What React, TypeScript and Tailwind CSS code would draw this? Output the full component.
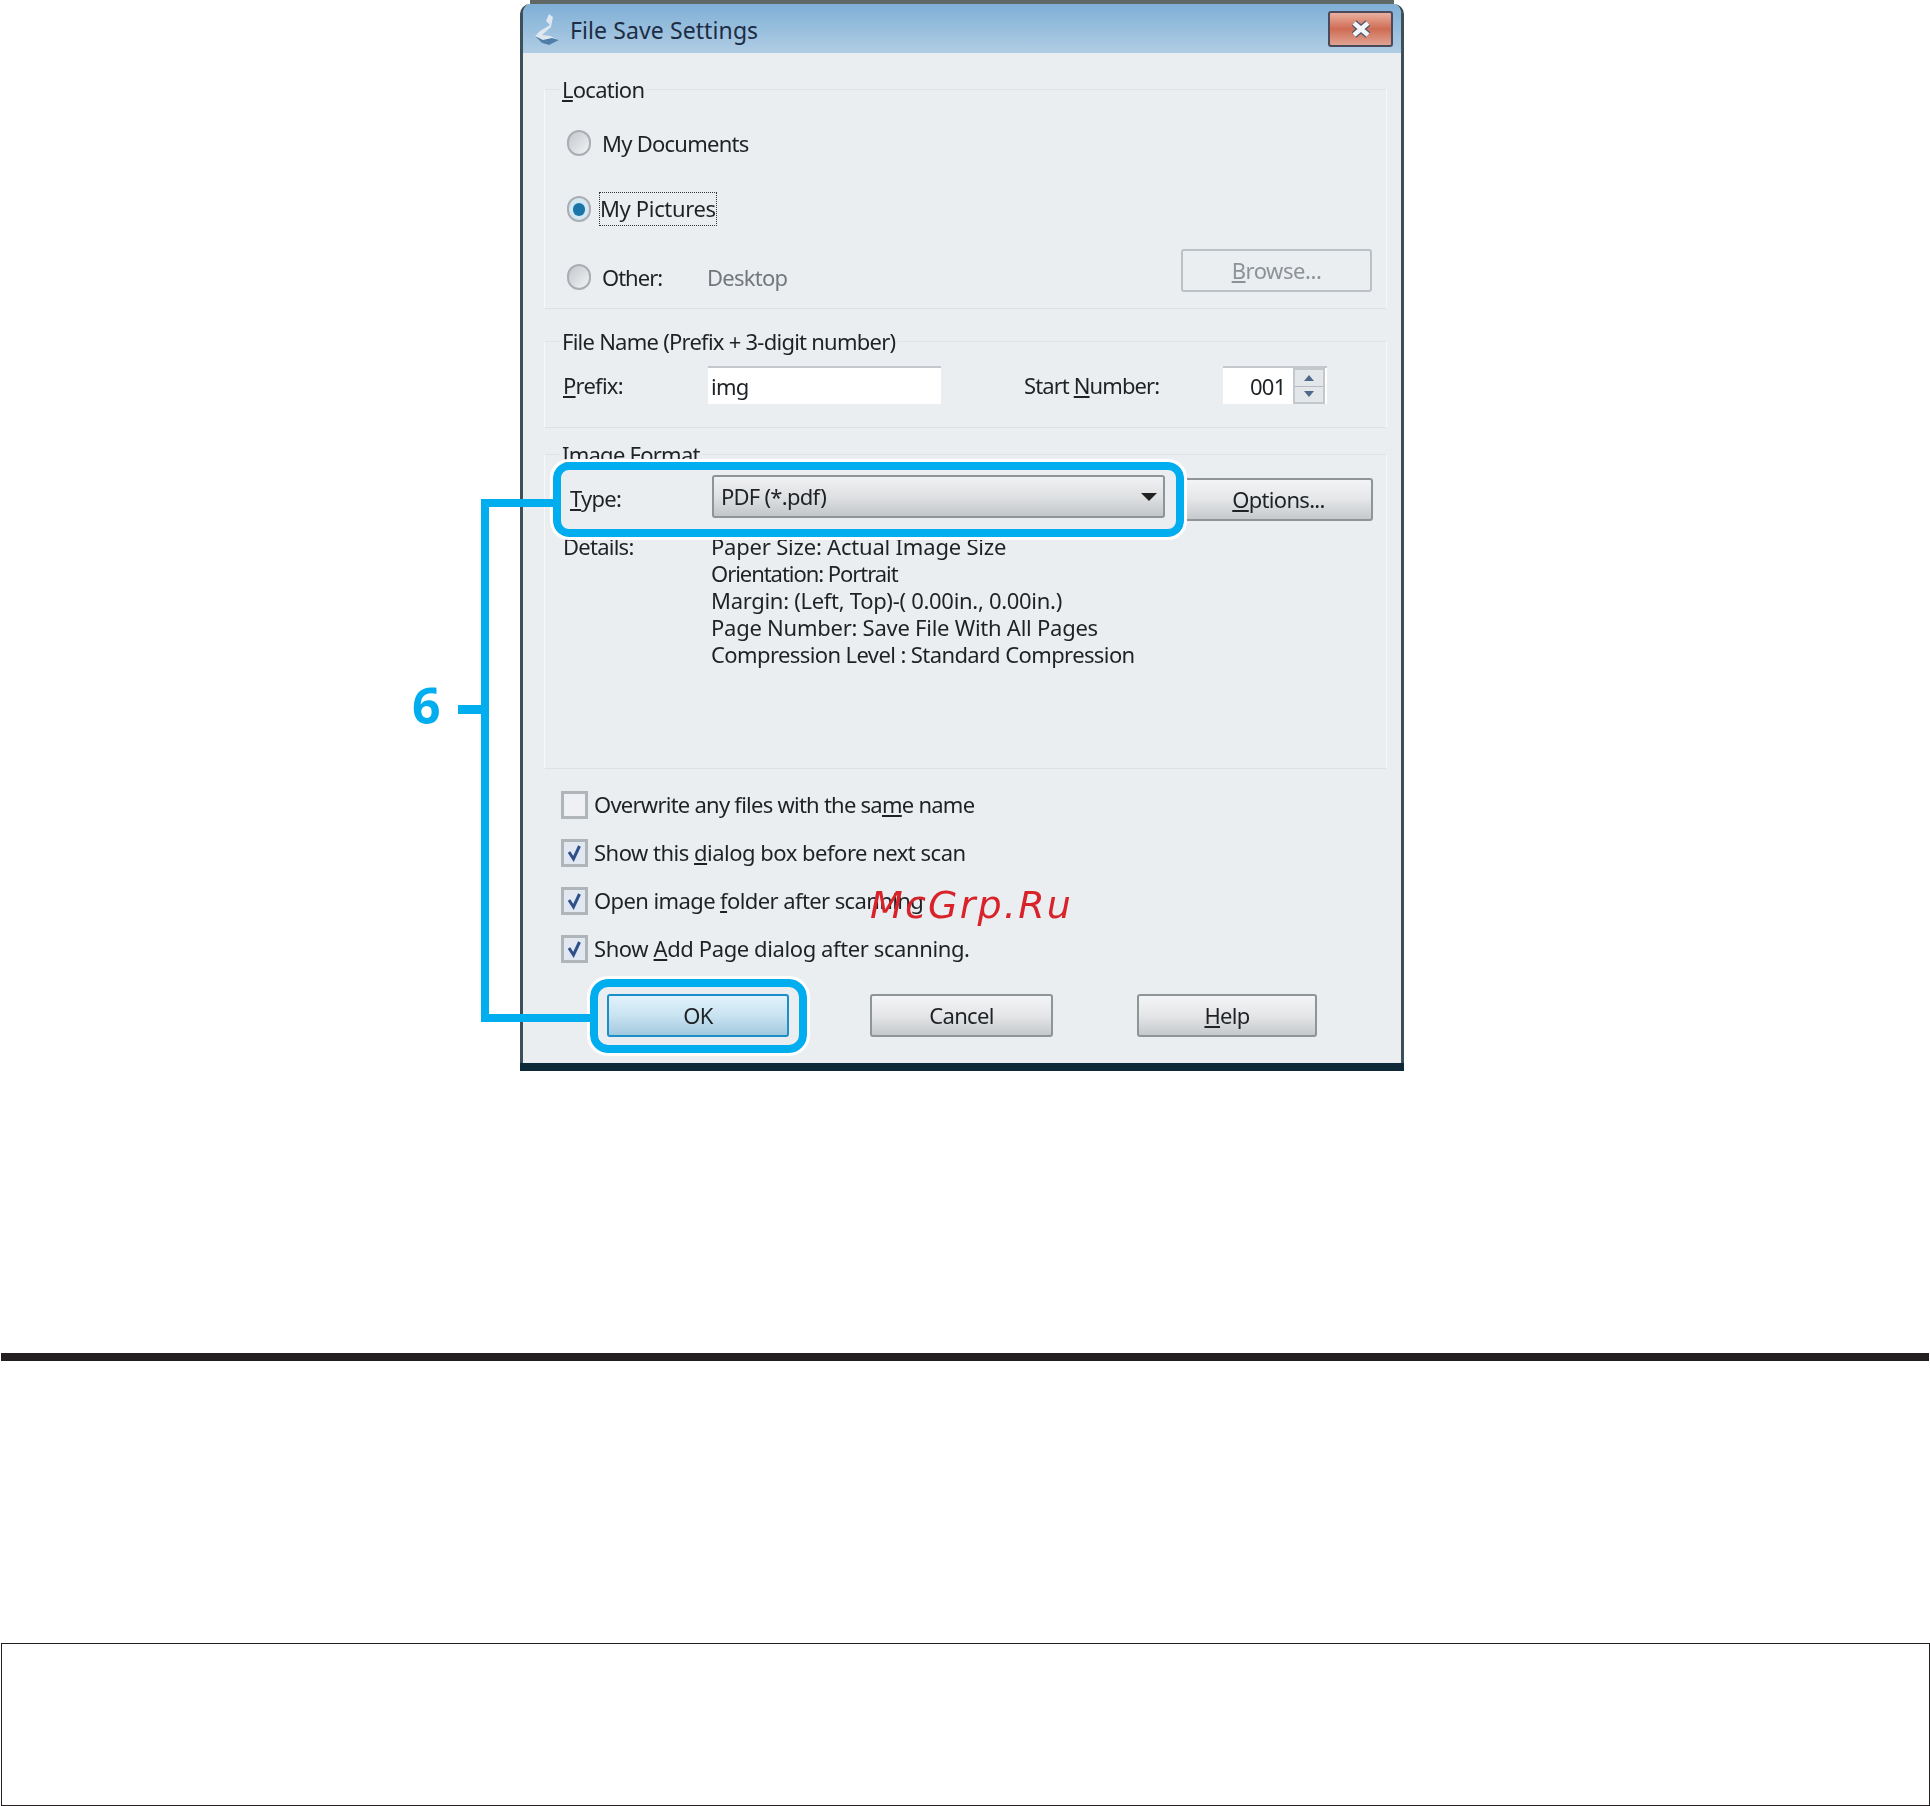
const ui = "font-['Noto_Sans','Open_Sans',sans-serif]";

function Fieldset({ title, className, children }: { title: React.ReactNode; className: string; children: React.ReactNode }) {
  return (
    <div className={`ml-[21px] mr-[14px] border-x border-y border-x-[#f7f8f9] border-t-[#dfe3e6] border-b-[#dde1e4] ${className}`}>
      <div className="-mt-[16px] ml-[15px] w-fit h-[30px] bg-[#ebeef1] px-[2px] text-[22px] leading-[30px] tracking-[-0.75px] text-[#1f2225]">
        {title}
      </div>
      {children}
    </div>
  );
}

function Radio({ checked }: { checked?: boolean }) {
  return (
    <span className={`flex h-[26px] w-[24px] shrink-0 items-center justify-center rounded-full border-2 border-[#a9aeb3] ${checked ? "bg-[#d3e8f3]" : "bg-gradient-to-br from-[#c4c8cc] to-[#f2f3f5]"}`}>
      {checked && <span className="h-[13px] w-[12px] rounded-full bg-[#1a76a8]" />}
    </span>
  );
}

function Check({ checked }: { checked?: boolean }) {
  return (
    <span className={`flex h-[28px] w-[27px] shrink-0 items-center justify-center border-[3px] border-[#b0b5ba] ${checked ? "bg-[#e2e8f2]" : "bg-[#eef0f3]"}`}>
      {checked && (
        <svg width="17" height="20" viewBox="0 0 17 20">
          <path d="M3 9 L7.5 16 L13.5 3" fill="none" stroke="#2f5088" strokeWidth="3" />
        </svg>
      )}
    </span>
  );
}

function CheckRow({ checked, className, children }: { checked?: boolean; className: string; children: React.ReactNode }) {
  return (
    <div className="flex h-[28px] items-center gap-[6px] text-[22px] text-[#1f2225]">
      <Check checked={checked} />
      <span className={`-translate-y-[1px] ${className}`}>{children}</span>
    </div>
  );
}

function Btn({ className, primary, children }: { className: string; primary?: boolean; children: React.ReactNode }) {
  return (
    <div
      className={`flex h-[43px] items-center justify-center rounded-[3px] border-2 bg-gradient-to-b text-[22px] tracking-[-0.7px] text-[#1f2225] ${
        primary
          ? "border-[#1b8fc7] from-[#e2f3fb] via-[#c9e3f1] to-[#a3c9df]"
          : "border-[#8f9497] from-[#f3f4f5] via-[#e4e6e8] to-[#c6c9cc]"
      } ${className}`}
    >
      {children}
    </div>
  );
}

function Dialog() {
  return (
    <div className={`ml-[520px] w-[884px] ${ui} blur-[0.6px]`}>
      <div className="mx-[10px] h-[4px] bg-[#5f6864]" />
      <div className="flex h-[1059px] flex-col overflow-hidden rounded-t-[10px] border-x-[3px] border-x-[#3d4f58] bg-[#ebeef1]">
        {/* title bar */}
        <div className="flex h-[49px] shrink-0 items-center bg-gradient-to-b from-[#7fafd6] to-[#b0cde4] pl-[9px] pr-[8px]">
          <svg width="30" height="34" viewBox="0 0 30 34" className="shrink-0">
            <path d="M17 2 L14 9 L18 13 L8 19 L3 24 L10 31 L16 33 L27 28 L18 24 L10 23 L19 15 L21 5 Z" fill="#dfe7ef" />
            <path d="M3 24 L10 31 L17 33 L27 28 L20 26 L11 28 Z" fill="#4f7ea8" />
          </svg>
          <span className="ml-[8px] mt-[4px] text-[23px] tracking-[0.1px] text-[#1c2d45]">File Save Settings</span>
          <div className="ml-auto flex h-[36px] w-[65px] items-center justify-center rounded-[3px] border-2 border-[#4a4a5c] bg-gradient-to-b from-[#e8b0a0] via-[#cf6b53] to-[#dfa392]">
            <svg width="26" height="20" viewBox="0 0 26 20">
              <path d="M6 4 L20 16 M20 4 L6 16" stroke="#4d5870" strokeWidth="7" />
              <path d="M6 4 L20 16 M20 4 L6 16" stroke="#f4f5f8" strokeWidth="4.5" />
            </svg>
          </div>
        </div>

        <div className="h-[36px] shrink-0" />

        {/* location */}
        <Fieldset title={<><u>L</u>ocation</>} className="h-[220px] shrink-0">
          <div className="flex flex-col text-[22px] tracking-[-0.75px] text-[#1f2225]">
            <div className="ml-[22px] mt-[26px] flex h-[26px] items-center gap-[11px]">
              <Radio />
              <span>My Documents</span>
            </div>
            <div className="ml-[22px] mt-[40px] flex h-[26px] items-center gap-[9px]">
              <Radio checked />
              <span className="h-[32px] leading-[30px] tracking-[-0.35px] outline outline-1 outline-dotted outline-[#333]">My Pictures</span>
            </div>
            <div className="ml-[22px] mt-[42px] flex h-[26px] items-center">
              <Radio />
              <span className="ml-[11px] w-[105px] tracking-[-1px]">Other:</span>
              <span className="text-[#72777c]">Desktop</span>
              <div className="ml-auto mr-[14px] flex h-[43px] w-[191px] shrink-0 -translate-y-[7px] items-center justify-center rounded-[3px] border-2 border-[#bcc1c5] text-[#8d9296]">
                <span className="tracking-[-0.45px]"><u>B</u>rowse...</span>
              </div>
            </div>
          </div>
        </Fieldset>

        <div className="h-[32px] shrink-0" />

        {/* file name */}
        <Fieldset title="File Name (Prefix + 3-digit number)" className="h-[87px] shrink-0">
          <div className="mt-[10px] flex items-center text-[22px] tracking-[-0.75px] text-[#1f2225]">
            <span className="ml-[18px] w-[145px]"><u>P</u>refix:</span>
            <div className="flex h-[38px] w-[233px] items-center border-t-2 border-[#c4c8cc] bg-white pl-[3px]">img</div>
            <span className="ml-[83px] w-[199px] tracking-[-0.9px]">Start <u>N</u>umber:</span>
            <div className="flex h-[38px] w-[104px] items-center border-t-2 border-[#c4c8cc] bg-white pl-[27px]">
              <span>001</span>
              <div className="ml-[7px] flex h-[36px] w-[32px] flex-col border-2 border-[#c3c8cc] bg-[#e3e7ea]">
                <div className="flex flex-1 items-center justify-center border-b border-[#b5bbc0]">
                  <span className="h-0 w-0 border-x-[5px] border-b-[6px] border-x-transparent border-b-[#4f6a88]" />
                </div>
                <div className="flex flex-1 items-center justify-center">
                  <span className="h-0 w-0 border-x-[5px] border-t-[6px] border-x-transparent border-t-[#4f6a88]" />
                </div>
              </div>
            </div>
          </div>
        </Fieldset>

        <div className="h-[26px] shrink-0" />

        {/* image format */}
        <Fieldset title="Image Format" className="h-[315px] shrink-0">
          <div className="text-[22px] tracking-[-0.75px] text-[#1f2225]">
            <div className="mt-[6px] flex items-center">
              <span className="ml-[25px] w-[142px] translate-y-[2px]"><u>T</u>ype:</span>
              <div className="flex h-[43px] w-[453px] items-center justify-between rounded-[3px] border-2 border-[#8f9497] bg-gradient-to-b from-[#f0f1f2] via-[#dfe1e3] to-[#c3c6c9] pl-[7px] pr-[6px]">
                <span>PDF (*.pdf)</span>
                <span className="h-0 w-0 border-x-[8px] border-t-[8px] border-x-transparent border-t-[#222]" />
              </div>
              <Btn className="ml-[19px] w-[189px] translate-y-[3px]"><span><u>O</u>ptions...</span></Btn>
            </div>
            <div className="mt-[15px] flex">
              <span className="ml-[18px] w-[148px] leading-[27px]">Details:</span>
              <div className="leading-[27px]">
                <div className="tracking-[-0.2px]">Paper Size: Actual Image Size</div>
                <div className="tracking-[-1.05px]">Orientation: Portrait</div>
                <div className="tracking-[-0.3px]">Margin: (Left, Top)-( 0.00in., 0.00in.)</div>
                <div className="tracking-[-0.25px]">Page Number: Save File With All Pages</div>
                <div className="tracking-[-0.6px]">Compression Level : Standard Compression</div>
              </div>
            </div>
          </div>
        </Fieldset>

        {/* options */}
        <div className="ml-[38px] mt-[22px] flex shrink-0 flex-col gap-[20px]">
          <CheckRow className="tracking-[-0.75px]">Overwrite any files with the sa<u>m</u>e name</CheckRow>
          <CheckRow checked className="tracking-[-0.5px]">Show this <u>d</u>ialog box before next scan</CheckRow>
          <CheckRow checked className="tracking-[-0.6px]">Open image <u>f</u>older after scanning</CheckRow>
          <CheckRow checked className="tracking-[-0.4px]">Show <u>A</u>dd Page dialog after scanning.</CheckRow>
        </div>

        <div className="ml-[84px] mt-[31px] flex shrink-0 gap-[81px]">
          <Btn primary className="w-[182px]">OK</Btn>
          <div className="flex gap-[84px]">
            <Btn className="w-[183px]">Cancel</Btn>
            <Btn className="w-[180px]"><span><u>H</u>elp</span></Btn>
          </div>
        </div>
      </div>
      <div className="h-[8px] bg-[#0e2a38]" />
    </div>
  );
}

export default function App() {
  return (
    <div className="relative h-[1806px] w-[1930px] overflow-hidden bg-white">
      <Dialog />

      {/* callouts drawn over the screenshot */}
      <div className="absolute left-[553px] top-[462px] h-[75px] w-[631px] rounded-[16px] border-[8px] border-[#00aeef] outline outline-[3px] outline-white" />
      <div className="absolute left-[590px] top-[979px] h-[74px] w-[217px] rounded-[18px] border-[8px] border-[#00aeef] outline outline-[3px] outline-white" />
      <div className="absolute left-[481px] top-[499px] h-[8px] w-[72px] bg-[#00aeef]" />
      <div className="absolute left-[481px] top-[499px] h-[523px] w-[8px] bg-[#00aeef]" />
      <div className="absolute left-[481px] top-[1014px] h-[8px] w-[110px] bg-[#00aeef]" />
      <div className="absolute left-[458px] top-[705px] h-[9px] w-[24px] bg-[#00aeef]" />
      <div className="absolute left-[412px] top-[671px] font-['Open_Sans',sans-serif] text-[50px] font-bold leading-[68px] text-[#00aeef]">6</div>
      <div className="absolute left-[870px] top-[881px] font-['DejaVu_Sans',sans-serif] text-[38px] italic leading-[48px] tracking-[2.2px] text-[#d9232a]">McGrp.Ru</div>

      <div className="ml-[1px] mr-[1px] mt-[282px] h-[8px] bg-[#231f20]" />
      <div className="ml-[1px] mt-[282px] h-[163px] w-[1929px] border-[1.5px] border-[#231f20]" />
    </div>
  );
}
